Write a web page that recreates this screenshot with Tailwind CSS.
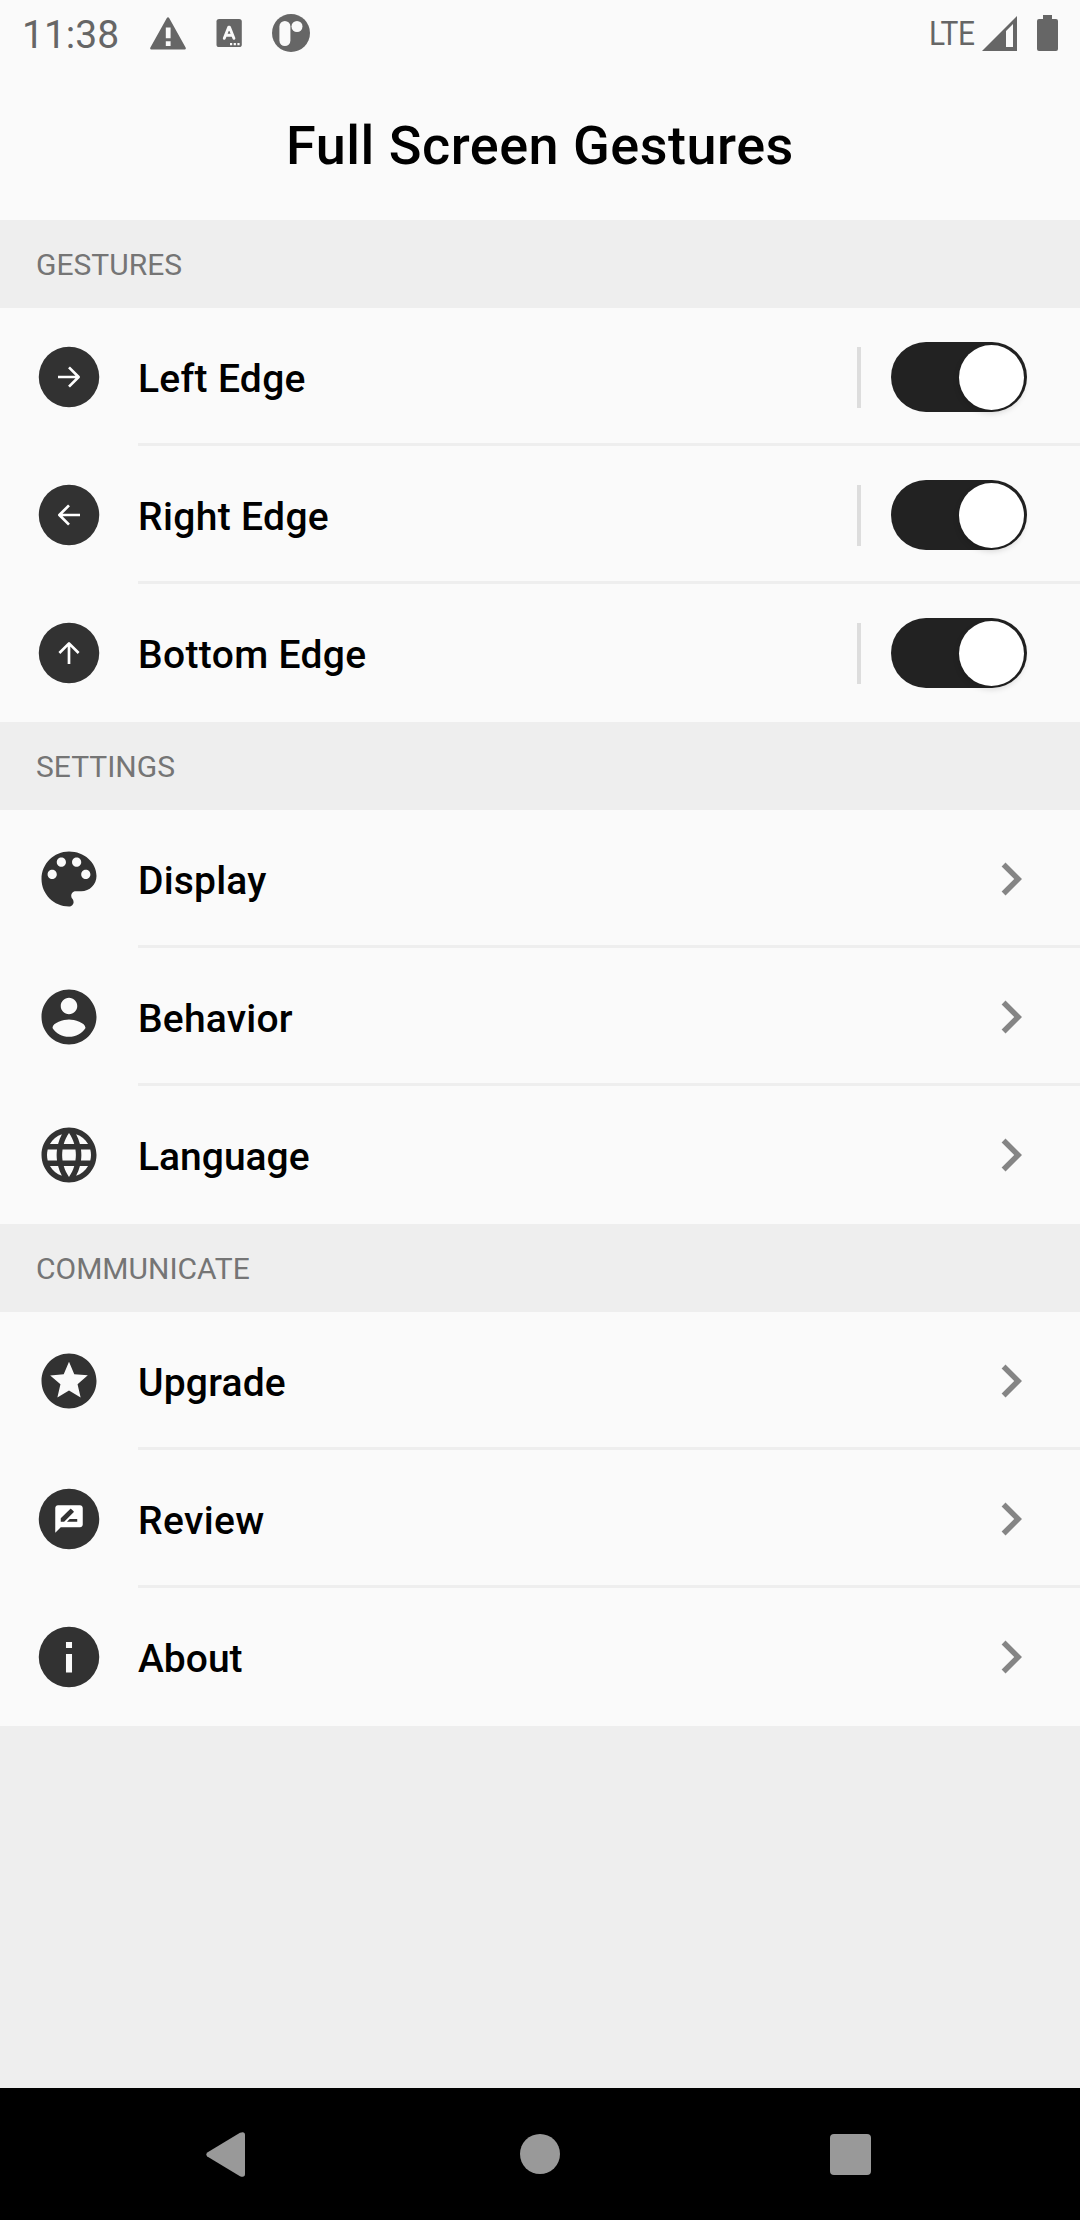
<!DOCTYPE html>
<html lang="en">
<head>
<meta charset="utf-8">
<title>Full Screen Gestures</title>
<script src="https://cdn.jsdelivr.net/npm/@tailwindcss/browser@4"></script>
</head>
<body class="w-[1080px] h-[2220px] flex flex-col overflow-hidden bg-[#eeeeee] font-['Roboto',sans-serif]">
<svg class="hidden">
  <symbol id="chevron" viewBox="0 0 24 24"><path fill="#858585" d="M10 6 8.59 7.41 13.17 12l-4.58 4.59L10 18l6-6z"/></symbol>
</svg>

<header class="h-[220px] bg-[#fafafa] flex flex-col shrink-0">
  <div class="h-[66px] flex items-center justify-between text-[#666666] pl-[22px] pr-[22px]">
    <div class="flex items-center">
      <span class="w-[128px] text-[39px] leading-[66px] pt-[3px]">11:38</span>
      <svg class="w-9 h-[33px]" viewBox="0 0 36 33"><path fill="#666" fill-rule="evenodd" d="M16.7 1.2Q18 -.8 19.3 1.2L35.6 30.6Q36.4 32.4 34.6 32.4H1.4Q-.4 32.4 .4 30.6ZM15.8 10.5V21.3H20.6V10.5ZM15.8 24.2V29H20.6V24.2Z"/></svg>
      <svg class="w-[26px] h-7 ml-[30px]" viewBox="0 0 26 28"><rect x=".5" width="25.3" height="28" rx="2.6" fill="#666"/><path d="M8.3 19.3 12.7 8.3h.8L17.9 19.3M10.2 16.2h6.4" fill="none" stroke="#fafafa" stroke-width="2.9" stroke-linecap="round" stroke-linejoin="round"/><path d="M14 24h2.2v2.2H14zM17.7 24h2.2v2.2h-2.2zM21.4 24h2.2v2.2h-2.2z" fill="#fafafa"/></svg>
      <svg class="w-[38px] h-[38px] ml-[30px]" viewBox="0 0 38 38"><circle cx="19" cy="19" r="19" fill="#666"/><rect x="7.4" y="7" width="11" height="25" rx="5.5" fill="#fafafa"/><circle cx="25" cy="12.5" r="5.5" fill="#fafafa"/></svg>
    </div>
    <div class="flex items-center">
      <span class="text-[34px] leading-[66px] tracking-[-0.6px] w-[53px] pb-[1px] origin-left scale-x-[0.88]">LTE</span>
      <svg class="w-[35px] h-[35px]" viewBox="0 0 35 35"><path fill="#666" fill-rule="evenodd" d="M0 35 35 0V35ZM24 15V31H31V8Z"/></svg>
      <svg class="w-[21px] h-9 ml-5" viewBox="0 0 21 36"><path fill="#666" d="M6 0h9v4h4q2 0 2 2v28q0 2-2 2H2q-2 0-2-2V6q0-2 2-2h4z"/></svg>
    </div>
  </div>
  <h1 class="h-[154px] pt-[5px] flex items-center justify-center text-[54px] font-medium text-black tracking-[0.5px]">Full Screen Gestures</h1>
</header>

<h2 class="h-[88px] shrink-0 pl-9 flex items-center text-[30px] text-[#757575]">GESTURES</h2>
<section class="bg-[#fafafa] shrink-0">
  <div class="h-[138px] flex items-center pl-9">
    <svg class="w-[66px] h-[66px] mr-9" viewBox="0 0 24 24"><circle cx="12" cy="12" r="11" fill="#323232"/><path d="M8 12h7.4M12 8.5 15.5 12 12 15.5" fill="none" stroke="#fff" stroke-width=".98" stroke-linejoin="round"/></svg>
    <div class="flex-1 h-full flex items-center pt-[3px] border-b-3 border-[#eeeeee] pr-[53px]">
      <span class="flex-1 text-[39px] font-medium text-black pt-[5px] tracking-[0.3px]">Left Edge</span>
      <span class="w-1 h-[61px] bg-[#dddddd] mr-[30px]"></span>
      <span class="w-[136px] h-[70px] rounded-full bg-[#222222] flex items-center justify-end pr-[3px]"><span class="w-[65px] h-[65px] rounded-full bg-white shadow-[0_3px_6px_rgba(0,0,0,0.16)]"></span></span>
    </div>
  </div>
  <div class="h-[138px] flex items-center pl-9">
    <svg class="w-[66px] h-[66px] mr-9" viewBox="0 0 24 24"><circle cx="12" cy="12" r="11" fill="#323232"/><path d="M16 12H8.6M12 8.5 8.5 12 12 15.5" fill="none" stroke="#fff" stroke-width=".98" stroke-linejoin="round"/></svg>
    <div class="flex-1 h-full flex items-center pt-[3px] border-b-3 border-[#eeeeee] pr-[53px]">
      <span class="flex-1 text-[39px] font-medium text-black pt-[5px] tracking-[0.35px]">Right Edge</span>
      <span class="w-1 h-[61px] bg-[#dddddd] mr-[30px]"></span>
      <span class="w-[136px] h-[70px] rounded-full bg-[#222222] flex items-center justify-end pr-[3px]"><span class="w-[65px] h-[65px] rounded-full bg-white shadow-[0_3px_6px_rgba(0,0,0,0.16)]"></span></span>
    </div>
  </div>
  <div class="h-[138px] flex items-center pl-9">
    <svg class="w-[66px] h-[66px] mr-9" viewBox="0 0 24 24"><circle cx="12" cy="12" r="11" fill="#323232"/><path d="M12 16V8.6M8.5 12 12 8.5 15.5 12" fill="none" stroke="#fff" stroke-width=".98" stroke-linejoin="round"/></svg>
    <div class="flex-1 h-full flex items-center pr-[53px]">
      <span class="flex-1 text-[39px] font-medium text-black pt-[5px] tracking-[0.35px]">Bottom Edge</span>
      <span class="w-1 h-[61px] bg-[#dddddd] mr-[30px]"></span>
      <span class="w-[136px] h-[70px] rounded-full bg-[#222222] flex items-center justify-end pr-[3px]"><span class="w-[65px] h-[65px] rounded-full bg-white shadow-[0_3px_6px_rgba(0,0,0,0.16)]"></span></span>
    </div>
  </div>
</section>

<h2 class="h-[88px] shrink-0 pl-9 flex items-center text-[30px] text-[#757575]">SETTINGS</h2>
<section class="bg-[#fafafa] shrink-0">
  <div class="h-[138px] flex items-center pl-9">
    <svg class="w-[66px] h-[66px] mr-9" viewBox="0 0 24 24" fill="#323232"><path transform="translate(-1.333 -1.333) scale(1.1111)" d="M12 3c-4.97 0-9 4.03-9 9s4.03 9 9 9c.83 0 1.5-.67 1.5-1.5 0-.39-.15-.74-.39-1.01-.23-.26-.38-.61-.38-.99 0-.83.67-1.5 1.5-1.5H16c2.76 0 5-2.24 5-5 0-4.42-4.03-8-9-8zm-5.5 9c-.83 0-1.5-.67-1.5-1.5S5.67 9 6.5 9 8 9.67 8 10.5 7.33 12 6.5 12zm3-4C8.67 8 8 7.33 8 6.5S8.67 5 9.5 5s1.5.67 1.5 1.5S10.33 8 9.5 8zm5 0c-.83 0-1.5-.67-1.5-1.5S13.67 5 14.5 5s1.5.67 1.5 1.5S15.33 8 14.5 8zm3 4c-.83 0-1.5-.67-1.5-1.5S16.67 9 17.5 9s1.5.67 1.5 1.5-.67 1.5-1.5 1.5z"/></svg>
    <div class="flex-1 h-full flex items-center pt-[3px] border-b-3 border-[#eeeeee] pr-9">
      <span class="flex-1 text-[39px] font-medium text-black pt-[5px] tracking-[0.2px]">Display</span>
      <svg class="w-[66px] h-[66px]"><use href="#chevron"/></svg>
    </div>
  </div>
  <div class="h-[138px] flex items-center pl-9">
    <svg class="w-[66px] h-[66px] mr-9" viewBox="0 0 24 24" fill="#323232"><path d="M12 2C6.48 2 2 6.48 2 12s4.48 10 10 10 10-4.48 10-10S17.52 2 12 2zm0 3c1.66 0 3 1.34 3 3s-1.34 3-3 3-3-1.34-3-3 1.34-3 3-3zm0 14.2c-2.5 0-4.71-1.28-6-3.22.03-1.99 4-3.08 6-3.08 1.99 0 5.97 1.09 6 3.08-1.29 1.94-3.5 3.22-6 3.22z"/></svg>
    <div class="flex-1 h-full flex items-center pt-[3px] border-b-3 border-[#eeeeee] pr-9">
      <span class="flex-1 text-[39px] font-medium text-black pt-[5px] tracking-[0.2px]">Behavior</span>
      <svg class="w-[66px] h-[66px]"><use href="#chevron"/></svg>
    </div>
  </div>
  <div class="h-[138px] flex items-center pl-9">
    <svg class="w-[66px] h-[66px] mr-9" viewBox="0 0 24 24" fill="#323232"><path d="M11.99 2C6.47 2 2 6.48 2 12s4.47 10 9.99 10C17.52 22 22 17.52 22 12S17.52 2 11.99 2zm6.93 6h-2.95c-.32-1.25-.78-2.45-1.38-3.56 1.84.63 3.37 1.91 4.33 3.56zM12 4.04c.83 1.2 1.48 2.53 1.91 3.96h-3.82c.43-1.43 1.08-2.76 1.91-3.96zM4.26 14C4.1 13.36 4 12.69 4 12s.1-1.36.26-2h3.38c-.08.66-.14 1.32-.14 2 0 .68.06 1.34.14 2H4.26zm.82 2h2.95c.32 1.25.78 2.45 1.38 3.56-1.84-.63-3.37-1.9-4.33-3.56zm2.95-8H5.08c.96-1.66 2.49-2.93 4.33-3.56C8.81 5.55 8.35 6.75 8.03 8zM12 19.96c-.83-1.2-1.48-2.53-1.91-3.96h3.82c-.43 1.43-1.08 2.76-1.91 3.96zM14.34 14H9.66c-.09-.66-.16-1.32-.16-2 0-.68.07-1.35.16-2h4.68c.09.65.16 1.32.16 2 0 .68-.07 1.34-.16 2zm.25 5.56c.6-1.11 1.06-2.31 1.38-3.56h2.95c-.96 1.65-2.49 2.93-4.33 3.56zM16.36 14c.08-.66.14-1.32.14-2 0-.68-.06-1.34-.14-2h3.38c.16.64.26 1.31.26 2s-.1 1.36-.26 2h-3.38z"/></svg>
    <div class="flex-1 h-full flex items-center pr-9">
      <span class="flex-1 text-[39px] font-medium text-black pt-[5px]">Language</span>
      <svg class="w-[66px] h-[66px]"><use href="#chevron"/></svg>
    </div>
  </div>
</section>

<h2 class="h-[88px] shrink-0 pl-9 flex items-center text-[30px] text-[#757575]">COMMUNICATE</h2>
<section class="bg-[#fafafa] shrink-0">
  <div class="h-[138px] flex items-center pl-9">
    <svg class="w-[66px] h-[66px] mr-9" viewBox="0 0 24 24" fill="#323232"><path d="M11.99 2C6.47 2 2 6.48 2 12s4.47 10 9.99 10C17.52 22 22 17.52 22 12S17.52 2 11.99 2zm4.24 16L12 15.45 7.77 18l1.12-4.81-3.73-3.23 4.92-.42L12 5l1.92 4.53 4.92.42-3.73 3.23L16.23 18z"/></svg>
    <div class="flex-1 h-full flex items-center pt-[3px] border-b-3 border-[#eeeeee] pr-9">
      <span class="flex-1 text-[39px] font-medium text-black pt-[5px] tracking-[0.2px]">Upgrade</span>
      <svg class="w-[66px] h-[66px]"><use href="#chevron"/></svg>
    </div>
  </div>
  <div class="h-[138px] flex items-center pl-9">
    <svg class="w-[66px] h-[66px] mr-9" viewBox="0 0 24 24"><circle cx="12" cy="12" r="11" fill="#323232"/><path transform="translate(6 6) scale(.5)" fill="#fff" d="M20 2H4c-1.1 0-1.99.9-1.99 2L2 22l4-4h14c1.1 0 2-.9 2-2V4c0-1.1-.9-2-2-2zM6 14v-2.47l6.88-6.88c.2-.2.51-.2.71 0l1.77 1.77c.2.2.2.51 0 .71L8.47 14H6zm12 0h-7.5l2-2H18v2z"/></svg>
    <div class="flex-1 h-full flex items-center pt-[3px] border-b-3 border-[#eeeeee] pr-9">
      <span class="flex-1 text-[39px] font-medium text-black pt-[5px] tracking-[0.4px]">Review</span>
      <svg class="w-[66px] h-[66px]"><use href="#chevron"/></svg>
    </div>
  </div>
  <div class="h-[138px] flex items-center pl-9">
    <svg class="w-[66px] h-[66px] mr-9" viewBox="0 0 24 24"><circle cx="12" cy="12" r="11" fill="#323232"/><path fill="#fafafa" d="M10.9 6.5h2.2v2.2h-2.2zM10.9 10.9h2.2v6.7h-2.2z"/></svg>
    <div class="flex-1 h-full flex items-center pr-9">
      <span class="flex-1 text-[39px] font-medium text-black pt-[5px]">About</span>
      <svg class="w-[66px] h-[66px]"><use href="#chevron"/></svg>
    </div>
  </div>
</section>

<nav class="mt-auto h-[132px] shrink-0 bg-black flex items-center justify-between pl-[206px] pr-[209px]">
  <svg class="w-[39px] h-[45px]" viewBox="0 0 39 45"><path fill="#999" d="M1.3 20.6Q-.6 22.5 1.3 24.4L34 44.2Q39 46 39 42V3Q39-1 34 .8Z"/></svg>
  <svg class="w-10 h-10 ml-[5px]" viewBox="0 0 40 40"><circle cx="20" cy="20" r="20" fill="#999"/></svg>
  <span class="w-[41px] h-[41px] rounded-[4px] bg-[#999999]"></span>
</nav>
</body>
</html>
